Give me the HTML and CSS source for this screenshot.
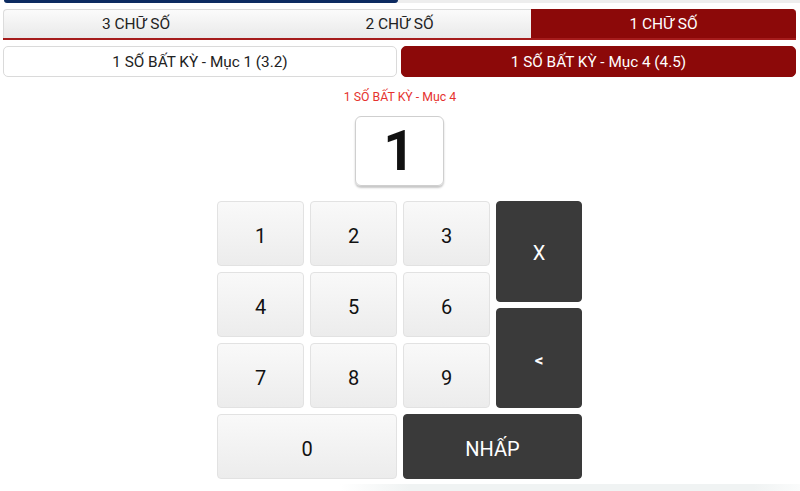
FILE: index.html
```html
<!DOCTYPE html>
<html lang="vi">
<head>
<meta charset="utf-8">
<link rel="stylesheet" href="styles.css">
</head>
<body>
<div class="topbar"><div class="navy"></div><div class="grey"></div></div>
<div class="tabs">
  <div class="tab first">3 CHỮ SỐ</div>
  <div class="tab">2 CHỮ SỐ</div>
  <div class="tab active last">1 CHỮ SỐ</div>
</div>
<div class="modes">
  <div class="mode">1 SỐ BẤT KỲ - Mục 1 (3.2)</div>
  <div class="mode active">1 SỐ BẤT KỲ - Mục 4 (4.5)</div>
</div>
<div class="label">1 SỐ BẤT KỲ - Mục 4</div>
<div class="display-wrap"><div class="display">1</div></div>
<div class="keypad">
  <div class="key">1</div>
  <div class="key">2</div>
  <div class="key">3</div>
  <div class="side">
    <div class="key dark">X</div>
    <div class="key dark small">&lt;</div>
  </div>
  <div class="key">4</div>
  <div class="key">5</div>
  <div class="key">6</div>
  <div class="key">7</div>
  <div class="key">8</div>
  <div class="key">9</div>
  <div class="key wide">0</div>
  <div class="key dark wide">NHẤP</div>
</div>
<div class="foot"></div>
</body>
</html>
```
FILE: styles.css
```css
html, body {
  margin: 0;
  padding: 0;
  background: #ffffff;
  font-family: Roboto, "Noto Sans", "Liberation Sans", sans-serif;
  color: #222;
  width: 800px;
  height: 491px;
  overflow: hidden;
}
.topbar {
  display: flex;
  height: 3px;
  margin-left: 4px;
}
.navy {
  width: 394px;
  height: 3px;
  background: #0d2b61;
  border-radius: 0 0 4px 4px;
}
.grey {
  flex: 1;
  height: 3px;
  background: #eeeeee;
}
.tabs {
  display: grid;
  grid-template-columns: 265px 263px 265px;
  margin: 6px 4px 0 3px;
  height: 29px;
  border-bottom: 2px solid #a51c1c;
}
.tab {
  display: flex;
  align-items: center;
  justify-content: center;
  font-size: 15.5px;
  color: #222;
  background: linear-gradient(#fbfbfb, #e9e9e9);
  border-top: 1px solid #dcdcdc;
}
.tab.first {
  border-left: 1px solid #dcdcdc;
  border-top-left-radius: 4px;
}
.tab.active {
  background: #8c0909;
  color: #fff;
  border-top-color: #8c0909;
}
.tab.last {
  border-top-right-radius: 4px;
}
.modes {
  display: grid;
  grid-template-columns: 394px 395px;
  gap: 4px;
  margin: 6px 4px 0 3px;
  height: 31px;
}
.mode {
  display: flex;
  align-items: center;
  justify-content: center;
  font-size: 15.3px;
  border: 1px solid #dadada;
  border-radius: 5px;
  background: #fff;
  color: #222;
}
.mode.active {
  background: #8c0909;
  border-color: #8c0909;
  color: #fff;
}
.label {
  text-align: center;
  color: #e5322f;
  font-size: 12.3px;
  margin-top: 13px;
  height: 14px;
  line-height: 14px;
}
.display-wrap {
  display: flex;
  justify-content: center;
  margin-top: 12px;
}
.display {
  width: 87px;
  height: 68px;
  border: 1px solid #cfcfcf;
  border-radius: 6px;
  box-shadow: 0 2px 2px rgba(0,0,0,0.22);
  display: flex;
  align-items: center;
  justify-content: center;
  font-size: 55px;
  font-weight: 700;
  color: #111;
  margin-left: -2px;
}
.keypad {
  display: grid;
  grid-template-columns: 87px 87px 87px 86px;
  grid-template-rows: 65px 65px 65px 65px;
  column-gap: 6px;
  row-gap: 6px;
  margin: 15px 0 0 217px;
  width: 365px;
}
.key {
  display: flex;
  align-items: center;
  justify-content: center;
  padding-top: 4px;
  font-size: 20px;
  color: #111;
  background: linear-gradient(#f9f9f9, #ececec);
  border: 1px solid #e2e2e2;
  border-radius: 4px;
  box-sizing: border-box;
}
.key.dark {
  background: #3a3a3a;
  border-color: #3a3a3a;
  color: #fff;
}
.key.small {
  font-size: 17px;
  font-weight: 700;
}
.key.wide {
  grid-column: span 2;
}
.side {
  grid-column: 4;
  grid-row: 1 / 4;
  display: flex;
  flex-direction: column;
  gap: 6px;
}
.side .key {
  flex: 1;
}
.foot {
  margin: 5px 0 0 340px;
  height: 8px;
  background: linear-gradient(90deg, rgba(240,243,243,0), #f0f3f3 15%, #f0f3f3 90%, rgba(240,243,243,0.3));
}
```
